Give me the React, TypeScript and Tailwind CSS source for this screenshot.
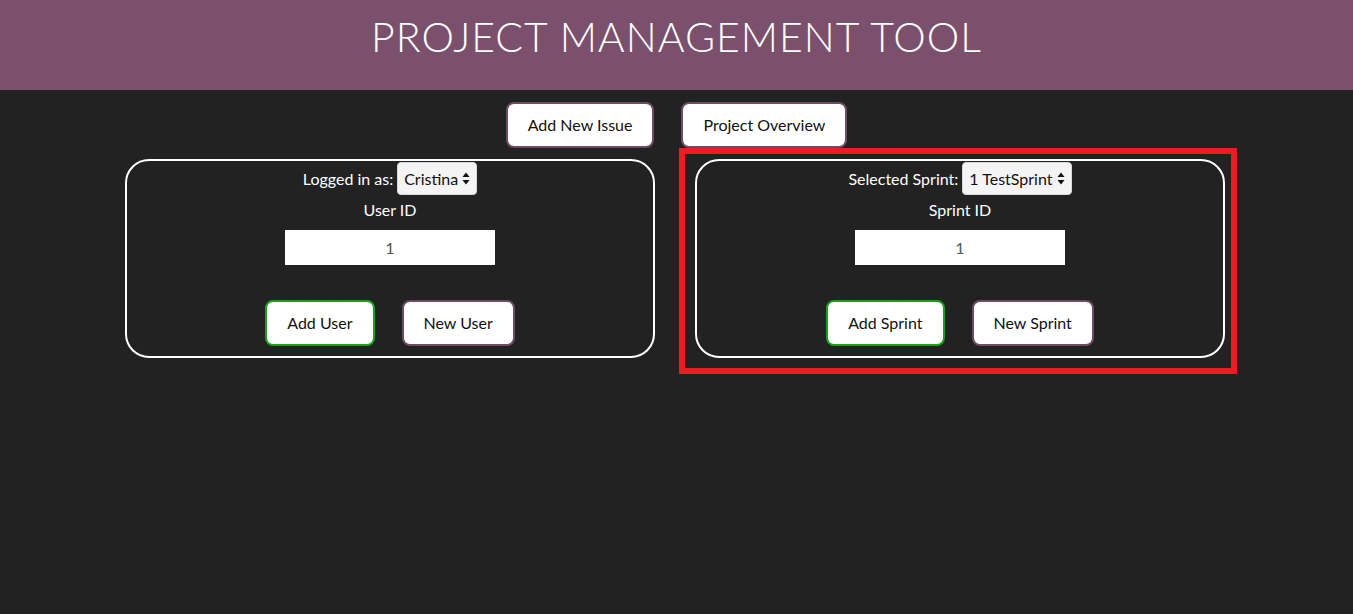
import React from "react";

const UpDown = () => (
  <svg width="8" height="13" viewBox="0 0 8 13" className="ml-1">
    <path d="M4 0.5 L7.5 5 L0.5 5 Z" fill="#111" />
    <path d="M4 12.5 L7.5 8 L0.5 8 Z" fill="#111" />
  </svg>
);

const FakeSelect = ({ value }: { value: string }) => (
  <div className="ml-1 flex h-[33px] items-center rounded-[4px] border border-[#d8d8d8] bg-[#f4f4f4] px-[6px] text-[16px] text-[#111]">
    {value}
    <UpDown />
  </div>
);

const Button = ({ label, green }: { label: string; green?: boolean }) => (
  <button
    className={
      "h-[46px] rounded-[8px] border-2 bg-white px-5 text-[16px] text-[#111] " +
      (green ? "border-[#16a31a]" : "border-[#6e4d63]")
    }
  >
    {label}
  </button>
);

const Panel = ({
  label,
  value,
  idLabel,
  addLabel,
  newLabel,
}: {
  label: string;
  value: string;
  idLabel: string;
  addLabel: string;
  newLabel: string;
}) => (
  <div className="flex h-[199px] w-[530px] flex-col items-center rounded-[24px] border-2 border-white pt-[1px]">
    <div className="flex items-center text-[16px] text-white">
      {label}
      <FakeSelect value={value} />
    </div>
    <div className="mt-[5px] text-[16px] leading-[20px] text-white">{idLabel}</div>
    <div className="mt-[10px] flex h-[35px] w-[210px] items-center justify-center bg-white text-[16px] text-[#555]">
      1
    </div>
    <div className="mt-[35px] flex gap-[27px]">
      <Button label={addLabel} green />
      <Button label={newLabel} />
    </div>
  </div>
);

const App = () => {
  return (
    <div className="min-h-[614px] bg-[#222222] font-['Lato','Open_Sans',sans-serif]">
      <header className="flex h-[90px] justify-center bg-[#7b506c] pt-[12px]">
        <h1 className="text-[41px] font-light leading-[50px] tracking-[1px] text-white">
          PROJECT MANAGEMENT TOOL
        </h1>
      </header>
      <div className="mt-[12px] flex justify-center gap-[27px]">
        <Button label="Add New Issue" />
        <Button label="Project Overview" />
      </div>
      <div className="mt-[11px] flex justify-center gap-[40px] pr-[3px]">
        <Panel
          label="Logged in as:"
          value="Cristina"
          idLabel="User ID"
          addLabel="Add User"
          newLabel="New User"
        />
        <div className="relative">
          <Panel
            label="Selected Sprint:"
            value="1 TestSprint"
            idLabel="Sprint ID"
            addLabel="Add Sprint"
            newLabel="New Sprint"
          />
          <div className="pointer-events-none absolute -top-[11px] -right-[12px] -bottom-[16px] -left-[16px] border-[6px] border-[#ec1c24]" />
        </div>
      </div>
    </div>
  );
};

export default App;
